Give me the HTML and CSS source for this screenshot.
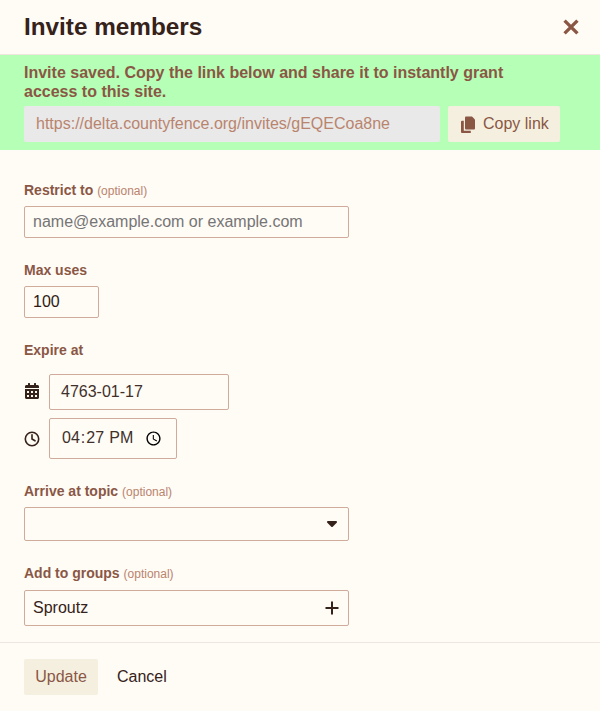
FILE: index.html
```html
<!DOCTYPE html>
<html lang="en">
<head>
<meta charset="utf-8">
<title>Invite members</title>
<link rel="stylesheet" href="styles.css">
</head>
<body>
<div class="modal">
  <header class="modal-header">
    <h1 class="modal-title">Invite members</h1>
    <button class="close-btn" aria-label="Close">
      <svg class="close-icon" viewBox="0 0 14 14"><path d="M2 2 12 12M12 2 2 12"/></svg>
    </button>
  </header>
  <section class="alert">
    <p class="alert-text">Invite saved. Copy the link below and share it to instantly grant access to this site.</p>
    <div class="link-row">
      <input class="link-input" type="text" readonly value="https://delta.countyfence.org/invites/gEQECoa8ne">
      <button class="copy-btn">
        <svg class="copy-icon" viewBox="0 0 14 17"><path d="M5 0.500h6L14 3.500v9a1 1 0 0 1-1 1H5a1 1 0 0 1-1-1V1.500a1 1 0 0 1 1-1z"/><path d="M2.800 4.800v9.900h7V17H1a1 1 0 0 1-1-1V5.800a1 1 0 0 1 1-1z"/></svg>
        <span class="copy-label">Copy link</span>
      </button>
    </div>
  </section>
  <form class="modal-body">
    <div class="field">
      <label class="field-label">Restrict to <span class="optional">(optional)</span></label>
      <input class="text-input wide" type="text" placeholder="name@example.com or example.com">
    </div>
    <div class="field">
      <label class="field-label">Max uses</label>
      <input class="text-input small" type="text" value="100">
    </div>
    <div class="field">
      <label class="field-label expire-label">Expire at</label>
      <div class="date-row">
        <svg class="side-icon date-icon" viewBox="0 0 448 512"><path d="M0 464c0 26.500 21.500 48 48 48h352c26.500 0 48-21.500 48-48V192H0v272zm320-196c0-6.600 5.400-12 12-12h40c6.600 0 12 5.400 12 12v40c0 6.600-5.400 12-12 12h-40c-6.600 0-12-5.400-12-12v-40zm0 128c0-6.600 5.400-12 12-12h40c6.600 0 12 5.400 12 12v40c0 6.600-5.400 12-12 12h-40c-6.600 0-12-5.400-12-12v-40zM192 268c0-6.600 5.400-12 12-12h40c6.600 0 12 5.400 12 12v40c0 6.600-5.400 12-12 12h-40c-6.600 0-12-5.400-12-12v-40zm0 128c0-6.600 5.400-12 12-12h40c6.600 0 12 5.400 12 12v40c0 6.600-5.400 12-12 12h-40c-6.600 0-12-5.400-12-12v-40zM64 268c0-6.600 5.400-12 12-12h40c6.600 0 12 5.400 12 12v40c0 6.600-5.400 12-12 12H76c-6.600 0-12-5.400-12-12v-40zm0 128c0-6.600 5.400-12 12-12h40c6.600 0 12 5.400 12 12v40c0 6.600-5.400 12-12 12H76c-6.600 0-12-5.400-12-12v-40zM400 64h-48V16c0-8.800-7.200-16-16-16h-32c-8.800 0-16 7.200-16 16v48H160V16c0-8.800-7.200-16-16-16h-32c-8.800 0-16 7.200-16 16v48H48C21.500 64 0 85.500 0 112v48h448v-48c0-26.500-21.500-48-48-48z"/></svg>
        <input class="text-input date-input" type="text" value="4763-01-17">
      </div>
      <div class="time-row">
        <svg class="side-icon" viewBox="0 0 16 16"><circle class="clock-line" cx="8" cy="8" r="6.700"/><path class="clock-line" d="M8 3.800V8l3 1.800"/></svg>
        <input class="text-input time-input" type="time" value="16:27">
      </div>
    </div>
    <div class="field">
      <label class="field-label">Arrive at topic <span class="optional">(optional)</span></label>
      <div class="select-box topic-select">
        <svg class="caret" viewBox="0 0 10 6"><path d="M1 1h8L5 5z"/></svg>
      </div>
    </div>
    <div class="field">
      <label class="field-label group-label">Add to groups <span class="optional">(optional)</span></label>
      <div class="select-box group-select">
        <span>Sproutz</span>
        <svg class="plus" viewBox="0 0 14 14"><path d="M7 0.500v13M0.500 7h13"/></svg>
      </div>
    </div>
  </form>
  <footer class="modal-footer">
    <button class="update-btn">Update</button>
    <button class="cancel-btn">Cancel</button>
  </footer>
</div>
</body>
</html>
```
FILE: styles.css
```css
* { box-sizing: border-box; }
html, body { margin: 0; height: 100%; }
body {
  background: #fffbf5;
  color: #35221a;
  font-family: "Liberation Sans", Arial, sans-serif;
  font-size: 16px;
  overflow: hidden;
}
.modal { display: flex; flex-direction: column; height: 711px; }
.modal-header {
  flex: none;
  display: flex;
  align-items: center;
  justify-content: space-between;
  height: 55px;
  padding: 0 20px 1px 24px;
  border-bottom: 1px solid #efe6e0;
}
.modal-title { margin: 0; font-size: 24.300px; line-height: 29px; font-weight: 700; }
.close-btn { display: flex; padding: 0; border: 0; background: none; }
.close-icon { width: 18px; height: 18px; fill: none; stroke: #8a5745; stroke-width: 2.600; }
.alert { flex: none; background: #b6ffb6; padding: 8px 24px 8px; height: 95px; }
.alert-text {
  margin: 0 0 5px;
  width: 500px;
  font-size: 16px;
  line-height: 19.200px;
  font-weight: 700;
  color: #8a5745;
}
.link-row { display: flex; gap: 8px; }
.link-input {
  width: 416px;
  height: 36px;
  padding: 0 12px;
  border: 0;
  border-radius: 2px;
  background: #e9e9e9;
  color: #b9846e;
  font: 16px "Liberation Sans", Arial, sans-serif;
}
.copy-btn {
  display: flex;
  align-items: center;
  gap: 8px;
  width: 112px;
  height: 36px;
  padding: 0 8px 0 13px;
  border: 0;
  border-radius: 2px;
  background: #f5efe0;
  color: #8a5745;
  font: 16px "Liberation Sans", Arial, sans-serif;
}
.copy-label { white-space: nowrap; }
.copy-icon { width: 14px; height: 17px; fill: #8a5745; flex: none; }
.modal-body { flex: 1; min-height: 0; padding: 32px 24px 0; }
.field { margin-bottom: 24px; }
.field-label {
  display: block;
  margin-bottom: 8px;
  font-size: 14px;
  line-height: 16px;
  font-weight: 700;
  color: #8a5745;
}
.expire-label { margin-bottom: 16px; }
.group-label { margin-bottom: 9px; }
.optional { font-size: 12px; line-height: 1; font-weight: 400; color: #b9846e; }
.text-input {
  display: block;
  border: 1px solid #d0ab9c;
  border-radius: 2px;
  background: #fffbf5;
  color: #2e1b14;
  font: 16px "Liberation Sans", Arial, sans-serif;
  outline: none;
}
.text-input::placeholder { color: #757575; opacity: 1; }
.wide { width: 325px; height: 32px; padding: 0 8px; }
.small { width: 75px; height: 32px; padding: 0 8px; }
.date-row, .time-row { display: flex; align-items: center; gap: 9px; }
.date-row { margin-bottom: 8px; }
.side-icon { width: 16px; height: 16px; fill: #35221a; flex: none; }
.date-icon { margin-bottom: 2px; }
.clock-line { fill: none; stroke: #35221a; stroke-width: 1.600; stroke-linecap: round; }
.date-input { width: 180px; height: 36px; padding: 0 11px; color: #40302a; }
.time-input { width: 128px; height: 41px; padding: 0 11px; color: #40302a; }
.select-box {
  display: flex;
  align-items: center;
  justify-content: space-between;
  width: 325px;
  border: 1px solid #d0ab9c;
  border-radius: 2px;
  padding: 0 9px 0 8px;
}
.topic-select { height: 34px; justify-content: flex-end; padding-right: 11px; }
.group-select { height: 36px; }
.caret { width: 10px; height: 6px; fill: #35221a; stroke: #35221a; stroke-width: 2; stroke-linejoin: round; overflow: visible; }
.plus { width: 14px; height: 14px; fill: none; stroke: #35221a; stroke-width: 2; }
.modal-footer {
  flex: none;
  display: flex;
  align-items: center;
  gap: 7px;
  height: 69px;
  padding: 0 24px;
  border-top: 1px solid #efe6e0;
}
.update-btn {
  width: 74px;
  height: 36px;
  border: 0;
  border-radius: 2px;
  background: #f5efe0;
  color: #8a5745;
  font: 16px "Liberation Sans", Arial, sans-serif;
}
.cancel-btn {
  height: 36px;
  padding: 0 12px;
  border: 0;
  background: none;
  color: #35221a;
  font: 16px "Liberation Sans", Arial, sans-serif;
}
```
